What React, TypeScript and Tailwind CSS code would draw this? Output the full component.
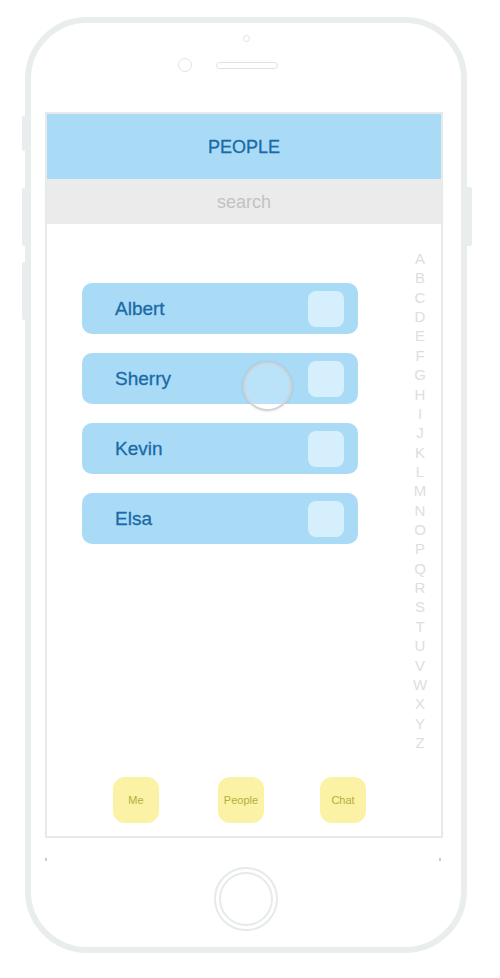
import React from "react";

const people = ["Albert", "Sherry", "Kevin", "Elsa"];
const letters = "ABCDEFGHIJKLMNOPQRSTUVWXYZ".split("");
const tabs = ["Me", "People", "Chat"];

function PersonRow({ name, touched }: { name: string; touched?: boolean }) {
    return (
        <div className="relative flex h-[51px] w-[276px] items-center justify-between rounded-[10px] bg-[#a9dbf7] pl-[33px] pr-[14px]">
            <span className="text-[19px] leading-none text-[#1b69a6] [-webkit-text-stroke:0.3px_#1b69a6]">{name}</span>
            <div className="h-[36px] w-[36px] rounded-[8px] bg-[#d6effc]" />
            {touched && (
                <div className="absolute left-[161px] top-[9px] h-[49px] w-[49px] rounded-full border-2 border-[#cfd3d5] bg-white/20 shadow-[0_0_3px_rgba(0,0,0,0.15)]" />
            )}
        </div>
    );
}

export default function App() {
    return (
        <div className="relative min-h-[978px] w-[500px] bg-white font-['Liberation_Sans',Arial,sans-serif]">
            {/* side buttons */}
            <div className="absolute left-[22px] top-[116px] h-[35px] w-[4px] rounded-l-[2px] bg-[#e9eded]" />
            <div className="absolute left-[22px] top-[188px] h-[58px] w-[4px] rounded-l-[2px] bg-[#e9eded]" />
            <div className="absolute left-[22px] top-[262px] h-[58px] w-[4px] rounded-l-[2px] bg-[#e9eded]" />
            <div className="absolute left-[466px] top-[187px] h-[59px] w-[6px] rounded-r-[2px] bg-[#e9eded]" />

            <div className="absolute left-[25px] top-[17px] flex h-[936px] w-[442px] flex-col rounded-[62px] border-[6px] border-[#e9eded] bg-white">
                {/* camera */}
                <div className="mx-auto mt-[12px] h-[7px] w-[7px] rounded-full border border-[#dde2e2]" />
                <div className="mt-[16px] flex h-[14px] items-center">
                    <div className="ml-[147px] h-[14px] w-[14px] rounded-full border border-[#dde2e2]" />
                    <div className="ml-[24px] h-[7px] w-[62px] rounded-full border border-[#dde2e2]" />
                </div>

                {/* screen */}
                <div className="ml-[14px] mt-[40px] flex h-[726px] w-[398px] flex-col border-2 border-[#e6eaea]">
                    <div className="flex h-[65px] items-center justify-center bg-[#a9dbf7]">
                        <span className="text-[18px] leading-none text-[#1b69a6] [-webkit-text-stroke:0.3px_#1b69a6]">PEOPLE</span>
                    </div>
                    <div className="flex h-[45px] items-center justify-center bg-[#ebebeb]">
                        <span className="text-[18px] leading-none text-[#c2c2c2]">search</span>
                    </div>
                    <div className="flex flex-1 flex-row">
                        <div className="ml-[35px] mt-[59px] flex flex-col gap-[19px]">
                            {people.map((p) => (
                                <PersonRow key={p} name={p} touched={p === "Sherry"} />
                            ))}
                        </div>
                        <div className="ml-[47px] mt-[25px] flex w-[30px] flex-col items-center">
                            {letters.map((l) => (
                                <span key={l} className="text-[15px] leading-[19.36px] text-[#dedede]">
                                    {l}
                                </span>
                            ))}
                        </div>
                    </div>
                    <div className="mb-[13px] flex h-[46px] items-center">
                        {tabs.map((t, i) => (
                            <div
                                key={t}
                                className={`flex h-[46px] w-[46px] items-center justify-center rounded-[12px] bg-[#fbf2a5] ${i === 0 ? "ml-[66px]" : i === 1 ? "ml-[59px]" : "ml-[56px]"}`}
                            >
                                <span className="text-[11px] leading-none text-[#b8ac3c]">{t}</span>
                            </div>
                        ))}
                    </div>
                </div>

                {/* corner marks */}
                <div className="ml-[14px] mt-[20px] flex w-[396px] justify-between">
                    <div className="h-[3px] w-[2px] bg-[#c8cccc]" />
                    <div className="h-[3px] w-[2px] bg-[#c8cccc]" />
                </div>

                {/* home button */}
                <div className="mx-auto mt-[6px] flex h-[64px] w-[64px] items-center justify-center rounded-full border-2 border-[#e6eaea]">
                    <div className="h-[54px] w-[54px] rounded-full border-2 border-[#e6eaea]" />
                </div>
            </div>
        </div>
    );
}
